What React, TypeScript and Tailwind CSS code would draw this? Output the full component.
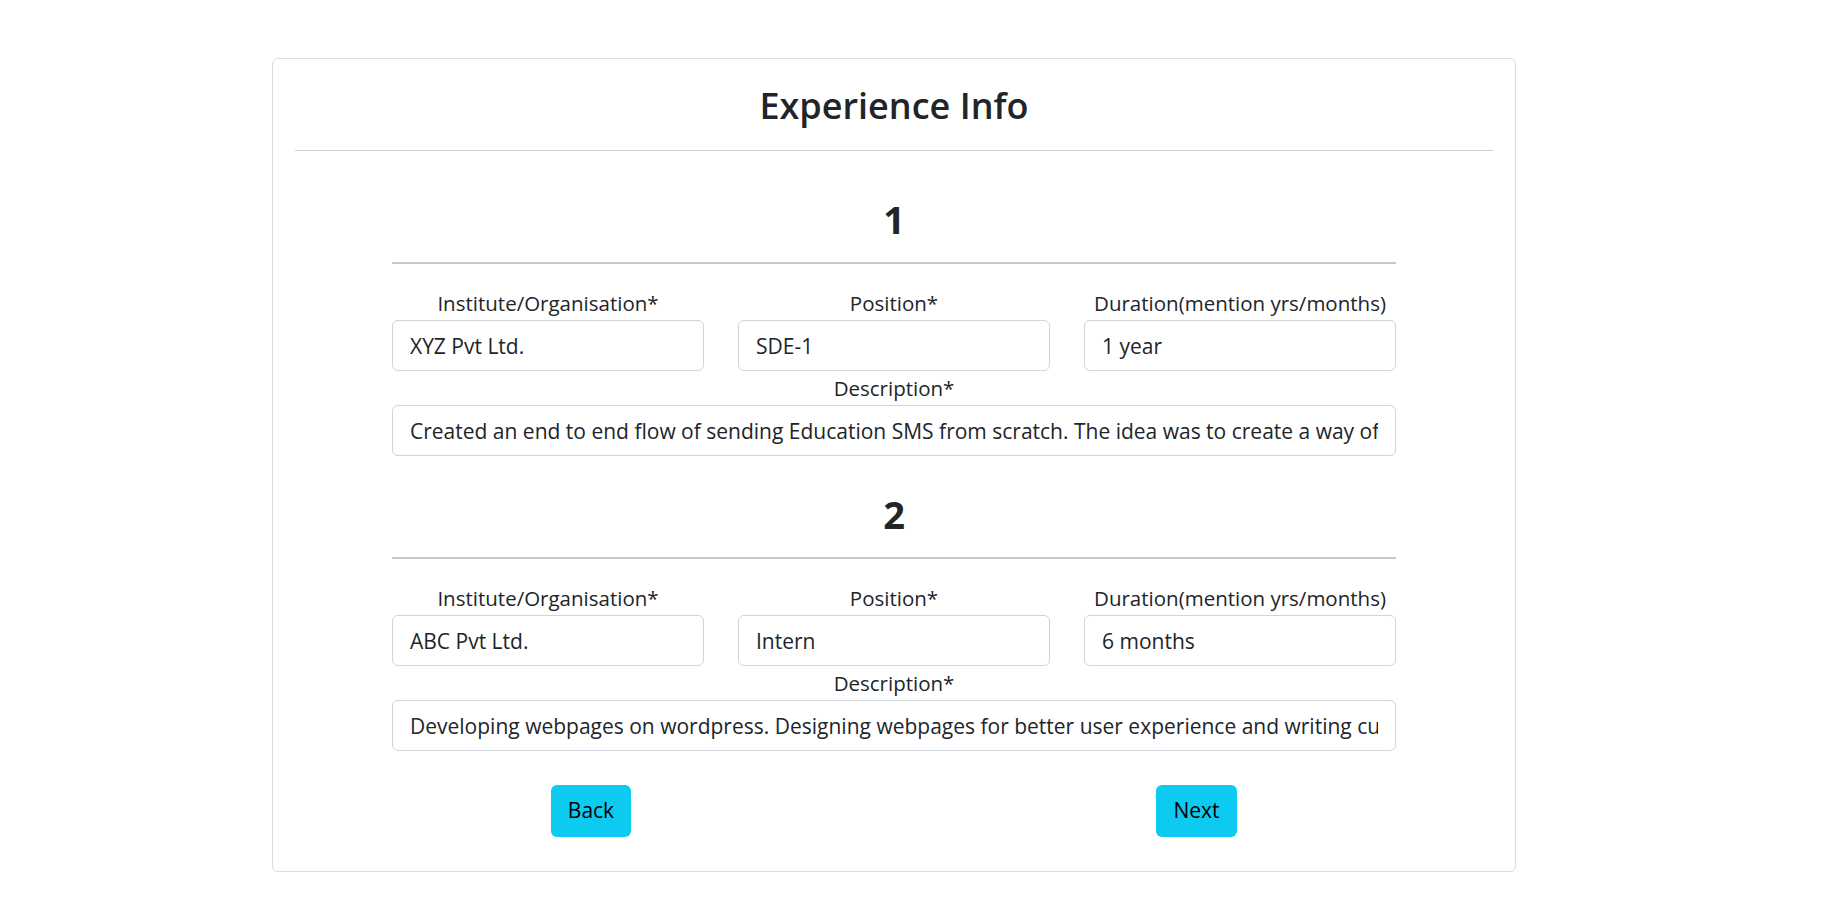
import React from "react";

type Exp = { org: string; pos: string; dur: string; desc: string };

const items: Exp[] = [
  {
    org: "XYZ Pvt Ltd.",
    pos: "SDE-1",
    dur: "1 year",
    desc:
      "Created an end to end flow of sending Education SMS from scratch. The idea was to create a way of sending education related messages to the users.",
  },
  {
    org: "ABC Pvt Ltd.",
    pos: "Intern",
    dur: "6 months",
    desc:
      "Developing webpages on wordpress. Designing webpages for better user experience and writing custom plugins for the website.",
  },
];

function Field({ label, value }: { label: string; value: string }) {
  return (
    <div className="flex flex-col">
      <div className="text-center text-[20.5px] leading-[26px] text-[#212529]">{label}</div>
      <input
        readOnly
        value={value}
        className="mt-[4px] h-[51px] w-full rounded-[6px] border border-[#ced4da] bg-white px-[17px] text-[21px] text-[#212529] outline-none"
      />
    </div>
  );
}

function Block({ n, e }: { n: number; e: Exp }) {
  return (
    <div className="flex flex-col pb-[36px]">
      <div className="text-center text-[38px] font-bold leading-[44px] text-[#212529]">{n}</div>
      <div className="mt-[21px] h-[2px] w-full bg-[#c8c8c8]" />
      <div className="mt-[26px] grid grid-cols-3 gap-x-[34px]">
        <Field label="Institute/Organisation*" value={e.org} />
        <Field label="Position*" value={e.pos} />
        <Field label="Duration(mention yrs/months)" value={e.dur} />
      </div>
      <div className="mt-[4px]">
        <Field label="Description*" value={e.desc} />
      </div>
    </div>
  );
}

export default function App() {
  return (
    <div className="min-h-screen bg-white font-['Open_Sans',sans-serif] text-[#212529]">
      <div className="pt-[58px] pl-[272px]">
        <div className="w-[1244px] rounded-[6px] border border-[#dcdcdc] px-[22px] pt-[25px] pb-[34px]">
          <h2 className="text-center text-[36px] font-semibold leading-[44px] text-[#212529]">Experience Info</h2>
          <div className="mt-[22px] h-px w-full bg-[#d2d2d2]" />
          <div className="mx-auto mt-[46px] w-[1004px]">
            {items.map((e, i) => (
              <Block key={i} n={i + 1} e={e} />
            ))}
          </div>
          <div className="-mt-[2px] flex justify-center gap-[525px]">
            <button className="h-[52px] w-[80px] rounded-[6px] bg-[#0dcaf0] text-[21px] text-black">Back</button>
            <button className="h-[52px] w-[81px] rounded-[6px] bg-[#0dcaf0] text-[21px] text-black">Next</button>
          </div>
        </div>
      </div>
    </div>
  );
}
